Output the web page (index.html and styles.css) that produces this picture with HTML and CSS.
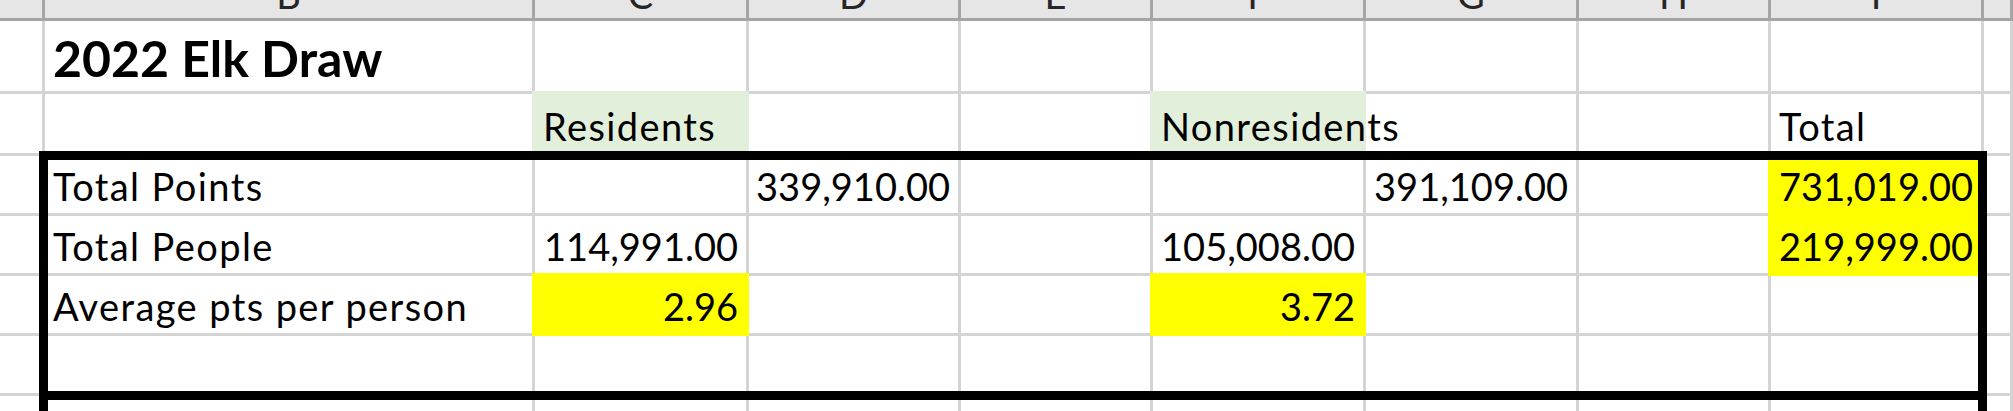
FILE: index.html
```html
<!DOCTYPE HTML>
<html>
<head>
    <meta charset="utf-8">
    <title>2022 Elk Draw</title>
    <link rel="stylesheet" href="styles.css">
</head>

<body>
    <div class='sheet'>
        <!-- column headers -->
        <div class='hd'></div>
        <div class='hd'><span>B</span></div>
        <div class='hd'><span>C</span></div>
        <div class='hd'><span>D</span></div>
        <div class='hd'><span>E</span></div>
        <div class='hd'><span>F</span></div>
        <div class='hd'><span>G</span></div>
        <div class='hd'><span>H</span></div>
        <div class='hd'><span>I</span></div>
        <div class='hd'></div>

        <!-- row 1 -->
        <div class='cell'></div>
        <div class='cell title'>2022 Elk Draw</div>
        <div class='cell'></div>
        <div class='cell'></div>
        <div class='cell'></div>
        <div class='cell'></div>
        <div class='cell'></div>
        <div class='cell'></div>
        <div class='cell'></div>
        <div class='cell'></div>

        <!-- row 2 -->
        <div class='cell'></div>
        <div class='cell'></div>
        <div class='cell green'>Residents</div>
        <div class='cell'></div>
        <div class='cell'></div>
        <div class='cell green'>Nonresidents</div>
        <div class='cell'></div>
        <div class='cell'></div>
        <div class='cell'>Total</div>
        <div class='cell'></div>

        <!-- row 3 -->
        <div class='cell'></div>
        <div class='cell'>Total Points</div>
        <div class='cell'></div>
        <div class='cell num'>339,910.00</div>
        <div class='cell'></div>
        <div class='cell'></div>
        <div class='cell num'>391,109.00</div>
        <div class='cell'></div>
        <div class='cell num yellow'>731,019.00</div>
        <div class='cell'></div>

        <!-- row 4 -->
        <div class='cell'></div>
        <div class='cell'>Total People</div>
        <div class='cell num'>114,991.00</div>
        <div class='cell'></div>
        <div class='cell'></div>
        <div class='cell num'>105,008.00</div>
        <div class='cell'></div>
        <div class='cell'></div>
        <div class='cell num yellow'>219,999.00</div>
        <div class='cell'></div>

        <!-- row 5 -->
        <div class='cell'></div>
        <div class='cell'>Average pts per person</div>
        <div class='cell num yellow'>2.96</div>
        <div class='cell'></div>
        <div class='cell'></div>
        <div class='cell num yellow'>3.72</div>
        <div class='cell'></div>
        <div class='cell'></div>
        <div class='cell'></div>
        <div class='cell'></div>

        <!-- row 6 -->
        <div class='cell'></div>
        <div class='cell'></div>
        <div class='cell'></div>
        <div class='cell'></div>
        <div class='cell'></div>
        <div class='cell'></div>
        <div class='cell'></div>
        <div class='cell'></div>
        <div class='cell'></div>
        <div class='cell'></div>

        <!-- row 7 -->
        <div class='cell'></div>
        <div class='cell'></div>
        <div class='cell'></div>
        <div class='cell'></div>
        <div class='cell'></div>
        <div class='cell'></div>
        <div class='cell'></div>
        <div class='cell'></div>
        <div class='cell'></div>
        <div class='cell'></div>

        <!-- thick outline borders drawn over the cells -->
        <div class='box'></div>
        <div class='box-below'></div>
    </div>
</body>
</html>
```

FILE: styles.css
```css
*{
    box-sizing: border-box;
}
html, body{
    margin: 0;
    background-color: #fff;
    overflow: hidden;
}
body{
    font-family: Lato, "Liberation Sans", sans-serif;
    color: #000;
}
.sheet{
    position: relative;
    display: grid;
    grid-template-columns: 45px 490px 214px 212px 192px 213px 213px 192px 213px 29px;
    grid-template-rows: 21px 73px 62px 60px 60px 60px 60px 30px;
    width: 2013px;
    height: 411px;
    overflow: hidden;
}
.hd{
    background-color: #e6e6e6;
    border-right: 3px solid #a5a5a5;
    border-bottom: 3px solid #a5a5a5;
    overflow: hidden;
    display: flex;
    justify-content: center;
    font-size: 38px;
    line-height: 1;
    color: #262626;
}
.hd span{
    margin-top: -25px;
}
.cell{
    border-right: 3px solid #d4d4d4;
    border-bottom: 3px solid #d4d4d4;
    display: flex;
    align-items: flex-end;
    padding: 0 8px 8px 8px;
    font-size: 38px;
    line-height: 1;
    letter-spacing: 1.4px;
    white-space: nowrap;
    min-width: 0;
}
.title{
    font-weight: 700;
    font-size: 50px;
    letter-spacing: 0;
}
.num{
    justify-content: flex-end;
    letter-spacing: 0;
}
.green{
    background-color: #e2efda;
    border-color: #e2efda;
    box-shadow: -3px 0 0 #e2efda, 0 -3px 0 #e2efda, -3px -3px 0 #e2efda;
}
.yellow{
    background-color: #ffff00;
    border-color: #ffff00;
    box-shadow: -3px 0 0 #ffff00, 0 -3px 0 #ffff00, -3px -3px 0 #ffff00;
}
.box{
    position: absolute;
    top: 151px;
    left: 39px;
    width: 1948px;
    height: 249px;
    border: 9px solid #000;
    pointer-events: none;
}
.box-below{
    position: absolute;
    top: 391px;
    left: 39px;
    width: 1948px;
    height: 40px;
    border-left: 9px solid #000;
    border-right: 9px solid #000;
    pointer-events: none;
}
```
